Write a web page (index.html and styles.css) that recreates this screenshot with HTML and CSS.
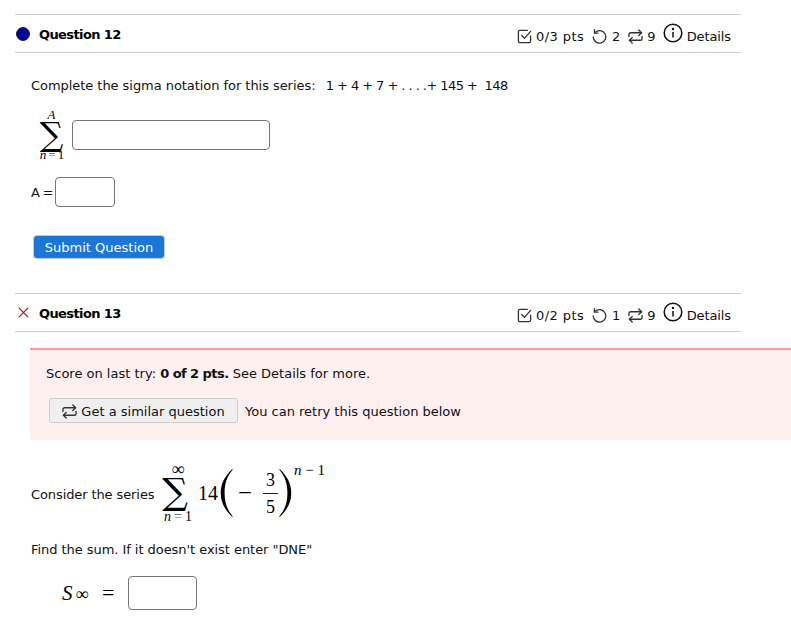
FILE: index.html
```html
<!DOCTYPE html>
<html lang="en">
<head>
    <meta charset="UTF-8">
    <title>Assignment</title>
    <link rel="stylesheet" href="styles.css">
</head>
<body>
    <!-- Question 12 -->
    <section class="question q12">
        <div class="qhead">
            <span class="status"><span class="dot"></span></span>
            <span class="qtitle">Question 12</span>
            <div class="meta">
                <svg class="ico ico-check" viewBox="0 0 16 16"><path d="M14.500 7.500v5.500a1.500 1.500 0 0 1-1.500 1.500H3a1.500 1.500 0 0 1-1.500-1.500V3A1.500 1.500 0 0 1 3 1.500h8"/><path d="M5 7l3 3 6.500-7.500"/></svg>
                <span class="pts">0/3 pts</span>
                <svg class="ico ico-undo" viewBox="0 0 16 16"><path d="M3.300 3.600A6.700 6.700 0 1 1 1.300 8.500"/><path d="M2.600 .8v3.600h3.800"/></svg>
                <span class="num first">2</span>
                <svg class="ico ico-retry" viewBox="0 0 16 16"><path d="M1 8V6a2 2 0 0 1 2-2h11.500"/><path d="M11.500 1l3 3-3 3"/><path d="M15 8v2a2 2 0 0 1-2 2H1.500"/><path d="M4.500 9l-3 3 3 3"/></svg>
                <span class="num">9</span>
                <svg class="ico-info" viewBox="0 0 20 20"><circle cx="10" cy="10" r="8.800"/><path d="M10 9v5.500"/><circle class="fill" cx="10" cy="6" r="1.200"/></svg>
                <span class="details">Details</span>
            </div>
        </div>
        <p class="prompt">Complete the sigma notation for this series:&nbsp; <span class="terms">1 + 4 + 7 + . . . .+ 145 +&nbsp; 148</span></p>
        <div class="sum-row">
            <div class="bigsum small">
                <i class="lim">A</i>
                <span class="sigma">∑</span>
                <span class="lim lower"><i>n</i><span class="eq">=</span>1</span>
            </div>
            <input class="box wide" type="text">
        </div>
        <div class="a-row">
            <span class="a-label">A =</span>
            <input class="box short" type="text">
        </div>
        <button class="submit">Submit Question</button>
    </section>

    <!-- Question 13 -->
    <section class="question q13">
        <div class="qhead">
            <span class="status">
                <svg class="ico-x" viewBox="0 0 12 12"><path d="M1 1l10 10M11 1L1 11"/></svg>
            </span>
            <span class="qtitle">Question 13</span>
            <div class="meta">
                <svg class="ico ico-check" viewBox="0 0 16 16"><path d="M14.500 7.500v5.500a1.500 1.500 0 0 1-1.500 1.500H3a1.500 1.500 0 0 1-1.500-1.500V3A1.500 1.500 0 0 1 3 1.500h8"/><path d="M5 7l3 3 6.500-7.500"/></svg>
                <span class="pts">0/2 pts</span>
                <svg class="ico ico-undo" viewBox="0 0 16 16"><path d="M3.300 3.600A6.700 6.700 0 1 1 1.300 8.500"/><path d="M2.600 .8v3.600h3.800"/></svg>
                <span class="num first">1</span>
                <svg class="ico ico-retry" viewBox="0 0 16 16"><path d="M1 8V6a2 2 0 0 1 2-2h11.500"/><path d="M11.500 1l3 3-3 3"/><path d="M15 8v2a2 2 0 0 1-2 2H1.500"/><path d="M4.500 9l-3 3 3 3"/></svg>
                <span class="num">9</span>
                <svg class="ico-info" viewBox="0 0 20 20"><circle cx="10" cy="10" r="8.800"/><path d="M10 9v5.500"/><circle class="fill" cx="10" cy="6" r="1.200"/></svg>
                <span class="details">Details</span>
            </div>
        </div>
        <div class="alert">
            <p class="score">Score on last try: <b>0 of 2 pts.</b> See Details for more.</p>
            <div class="retry-row">
                <button class="similar">
                    <svg class="ico ico-retry" viewBox="0 0 16 16"><path d="M1 8V6a2 2 0 0 1 2-2h11.500"/><path d="M11.500 1l3 3-3 3"/><path d="M15 8v2a2 2 0 0 1-2 2H1.500"/><path d="M4.500 9l-3 3 3 3"/></svg>
                    Get a similar question
                </button>
                <span class="retry-note">You can retry this question below</span>
            </div>
        </div>
        <div class="series">
            <span class="series-label">Consider the series</span>
            <div class="bigsum large">
                <span class="lim inf">∞</span>
                <span class="sigma">∑</span>
                <span class="lim lower"><i>n</i><span class="eq">=</span>1</span>
            </div>
            <span class="math fourteen">14</span>
            <svg class="paren" viewBox="0 0 13 50"><path d="M12.500 0C4.500 8 .5 15 .5 25s4 17 12 25l.5-.6C7 42 4.500 35 4.500 25S7 8 13 .6z"/></svg>
            <span class="math minus">−</span>
            <div class="frac"><span>3</span><span>5</span></div>
            <svg class="paren close" viewBox="0 0 13 50"><path d="M.5 0c8 8 12 15 12 25S8.500 42 .5 50L0 49.400C6 42 8.500 35 8.500 25S6 8 0 .6z"/></svg>
            <span class="math power"><i>n</i> − 1</span>
        </div>
        <p class="find">Find the sum. If it doesn't exist enter "DNE"</p>
        <div class="s-row">
            <span class="math sinf"><i>S</i><small>∞</small></span>
            <span class="math equals">=</span>
            <input class="box answer" type="text">
        </div>
    </section>
</body>
</html>
```

FILE: styles.css
```css
body {
    margin: 0;
    background: #fff;
    color: #111;
    font-family: "DejaVu Sans", sans-serif;
    font-size: 13px;
    overflow: hidden;
}
p {
    margin: 0;
}
.question {
    padding-left: 15px;
}
.q12 {
    padding-top: 14px;
    height: 279px;
}
.qhead {
    display: flex;
    align-items: center;
    width: 726px;
    height: 37px;
    border-top: 1px solid #ccc;
    border-bottom: 1px solid #ccc;
}
.status {
    display: flex;
    justify-content: center;
    width: 16px;
    margin-right: 8px;
}
.dot {
    width: 14px;
    height: 14px;
    background: #00009c;
    border: 1px solid #223;
    border-radius: 50%;
    box-sizing: border-box;
}
.ico-x {
    width: 11px;
    height: 11px;
    fill: none;
    stroke: #a01525;
    stroke-width: 1.400;
}
.qtitle {
    padding-top: 2px;
    font-weight: bold;
    letter-spacing: -0.6px;
    color: #000;
}
.meta {
    display: flex;
    align-items: center;
    margin-left: auto;
    padding-right: 10px;
    padding-top: 6px;
}
.ico {
    width: 15px;
    height: 15px;
    fill: none;
    stroke: #333;
    stroke-width: 1.400;
    stroke-linecap: round;
    stroke-linejoin: round;
}
.pts {
    margin: 0 8px 0 4px;
    letter-spacing: 0.4px;
}
.num {
    margin-left: 4px;
    margin-right: 7px;
}
.num.first {
    margin-left: 5px;
    margin-right: 8px;
}
.ico-info {
    width: 20px;
    height: 20px;
    margin: -7px 4px 0 0;
    fill: none;
    stroke: #111;
    stroke-width: 1.500;
}
.ico-info .fill {
    fill: #111;
    stroke: none;
}
.details {
    letter-spacing: -0.1px;
}
.prompt {
    margin: 25px 0 0 16px;
    letter-spacing: -0.05px;
}
.terms {
    margin-left: 2px;
    letter-spacing: -0.55px;
}
.sum-row {
    display: flex;
    align-items: flex-start;
    margin: 15px 0 0 23px;
}
.bigsum {
    display: flex;
    flex-direction: column;
    align-items: center;
    font-family: "Liberation Serif", serif;
    line-height: 1;
    color: #000;
}
.bigsum.small {
    width: 27px;
}
.lim {
    font-size: 13px;
    white-space: nowrap;
}
.eq {
    margin: 0 2px;
    color: #555;
}
.bigsum.small .lim:first-child {
    height: 13px;
}
.bigsum.small .lower {
    margin: -1px 0 0 1px;
}
.sigma {
    font-family: "DejaVu Serif", serif;
    font-size: 33px;
    height: 28px;
    line-height: 28px;
}
.box {
    box-sizing: border-box;
    border: 1px solid #777;
    border-radius: 4px;
    background: #fff;
    padding: 0;
}
.wide {
    width: 198px;
    height: 30px;
    margin: 12px 0 0 7px;
}
.a-row {
    display: flex;
    align-items: center;
    gap: 5px;
    margin: 16px 0 0 16px;
}
.a-label {
    width: 19px;
    white-space: nowrap;
    letter-spacing: -0.6px;
}
.short {
    width: 60px;
    height: 30px;
}
.submit {
    display: block;
    width: 132px;
    height: 24px;
    margin: 28px 0 0 18px;
    padding: 0;
    background: #1c76d6;
    border: 1px solid #bcd;
    border-radius: 4px;
    color: #fff;
    font: 13px "DejaVu Sans", sans-serif;
}
.alert {
    margin: 16px 0 0 15px;
    height: 92px;
    padding-top: 16px;
    box-sizing: border-box;
    background: #fff0f0;
    border-top: 2px solid #f99;
}
.score {
    margin-left: 16px;
}
.score b {
    letter-spacing: -0.55px;
}
.retry-row {
    display: flex;
    align-items: center;
    gap: 7px;
    margin: 17px 0 0 19px;
}
.similar {
    display: flex;
    align-items: center;
    gap: 4px;
    justify-content: center;
    width: 189px;
    height: 25px;
    padding: 1px 0 0;
    background: #efefef;
    border: 1px solid #ccc;
    border-radius: 3px;
    color: #111;
    font: 13px "DejaVu Sans", sans-serif;
}
.retry-note {
    padding-top: 2px;
}
.series {
    display: flex;
    align-items: center;
    height: 66px;
    margin: 20px 0 0 16px;
}
.series-label {
    width: 129px;
    padding-top: 2px;
    letter-spacing: -0.1px;
}
.math {
    font-family: "Liberation Serif", serif;
    color: #000;
}
.bigsum.large {
    width: 36px;
}
.bigsum.large .sigma {
    font-size: 36px;
    height: 32px;
    line-height: 32px;
    margin-right: 6px;
}
.bigsum.large .lower {
    margin-top: 2px;
    font-size: 14px;
}
.bigsum.large .eq {
    margin: 0 3px;
}
.inf {
    font-size: 18px;
    height: 13px;
    line-height: 13px;
}
.fourteen {
    font-size: 20px;
    margin: 0 2px;
}
.paren {
    width: 13px;
    height: 48px;
    fill: #000;
}
.paren.close {
    margin-left: 1px;
}
.minus {
    font-size: 25px;
    margin-left: 5px;
    width: 14px;
}
.frac {
    display: flex;
    flex-direction: column;
    align-items: center;
    width: 15px;
    margin-left: 11px;
    font: 18px/26px "Liberation Serif", serif;
    color: #000;
}
.frac span:first-child {
    border-bottom: 1px solid #222;
    align-self: stretch;
    text-align: center;
}
.power {
    font-size: 15px;
    margin: -46px 0 0 2px;
    white-space: nowrap;
}
.find {
    margin: 16px 0 0 16px;
    letter-spacing: -0.05px;
}
.s-row {
    display: flex;
    align-items: center;
    margin: 19px 0 0 47px;
}
.sinf {
    font-size: 21px;
    width: 40px;
}
.sinf small {
    font-size: 18px;
    margin-left: 3px;
}
.equals {
    font-size: 22px;
    width: 26px;
}
.answer {
    width: 69px;
    height: 34px;
}
```
